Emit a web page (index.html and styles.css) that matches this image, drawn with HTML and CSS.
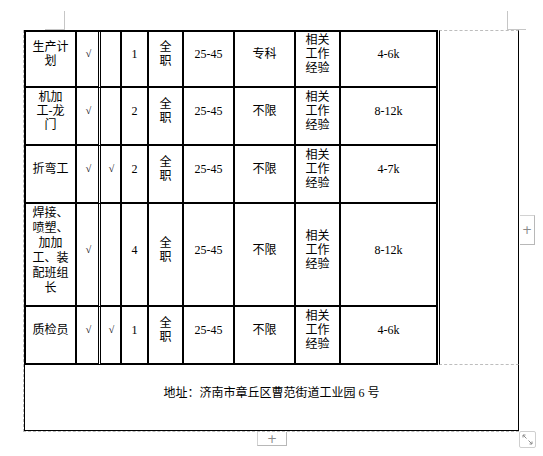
FILE: index.html
```html
<!DOCTYPE html>
<html lang="zh-CN">
<head>
<meta charset="utf-8">
<title>招聘岗位</title>
<link rel="stylesheet" href="styles.css">
</head>
<body>
<div class="page">
  <span class="mark mark-tl"></span>
  <span class="mark mark-tr"></span>
  <div class="doc">
    <div class="top">
      <div class="jobs">
        <div class="c"><span>生产计<br>划</span></div>
        <div class="c chk"><span>√</span></div>
        <div class="c chk"><span></span></div>
        <div class="c"><span>1</span></div>
        <div class="c"><span>全<br>职</span></div>
        <div class="c"><span>25-45</span></div>
        <div class="c"><span>专科</span></div>
        <div class="c"><span>相关<br>工作<br>经验</span></div>
        <div class="c"><span>4-6k</span></div>

        <div class="c"><span>机加<br>工-龙<br>门</span></div>
        <div class="c chk"><span>√</span></div>
        <div class="c chk"><span></span></div>
        <div class="c"><span>2</span></div>
        <div class="c"><span>全<br>职</span></div>
        <div class="c"><span>25-45</span></div>
        <div class="c"><span>不限</span></div>
        <div class="c"><span>相关<br>工作<br>经验</span></div>
        <div class="c"><span>8-12k</span></div>

        <div class="c"><span>折弯工</span></div>
        <div class="c chk"><span>√</span></div>
        <div class="c chk"><span>√</span></div>
        <div class="c"><span>2</span></div>
        <div class="c"><span>全<br>职</span></div>
        <div class="c"><span>25-45</span></div>
        <div class="c"><span>不限</span></div>
        <div class="c"><span>相关<br>工作<br>经验</span></div>
        <div class="c"><span>4-7k</span></div>

        <div class="c c-tall"><span>焊接、<br>喷塑、<br>加加<br>工、装<br>配班组<br>长</span></div>
        <div class="c chk"><span>√</span></div>
        <div class="c chk"><span></span></div>
        <div class="c"><span>4</span></div>
        <div class="c"><span>全<br>职</span></div>
        <div class="c"><span>25-45</span></div>
        <div class="c"><span>不限</span></div>
        <div class="c"><span>相关<br>工作<br>经验</span></div>
        <div class="c"><span>8-12k</span></div>

        <div class="c"><span>质检员</span></div>
        <div class="c chk"><span>√</span></div>
        <div class="c chk"><span>√</span></div>
        <div class="c"><span>1</span></div>
        <div class="c"><span>全<br>职</span></div>
        <div class="c"><span>25-45</span></div>
        <div class="c"><span>不限</span></div>
        <div class="c"><span>相关<br>工作<br>经验</span></div>
        <div class="c"><span>4-6k</span></div>
      </div>
      <div class="side"></div>
    </div>
    <div class="addr">地址：济南市章丘区曹范街道工业园 6 号</div>
  </div>
  <div class="tab tab-bottom">+</div>
  <div class="tab tab-right">+</div>
  <div class="resize">
    <svg width="15" height="15" viewBox="0 0 15 15">
      <path d="M3 3 L6.5 6.5 M3 3 L3 5.5 M3 3 L5.5 3" stroke="#8c8c8c" stroke-width="1" fill="none"/>
      <path d="M12 12 L8.5 8.5 M12 12 L12 9.5 M12 12 L9.5 12" stroke="#8c8c8c" stroke-width="1" fill="none"/>
    </svg>
  </div>
</div>
</body>
</html>
```

FILE: styles.css
```css
html, body {
  margin: 0;
  padding: 0;
  background: #ffffff;
}

.page {
  position: relative;
  width: 543px;
  height: 456px;
  box-sizing: border-box;
  padding: 30px 0 0 23px;
  font: 12px/14px "Liberation Serif", "Noto Sans CJK SC", serif;
  color: #000;
}

.mark {
  position: absolute;
  border-style: solid;
  border-color: #c6c6c6;
}

.mark-tl {
  left: 45px;
  top: 11px;
  width: 19px;
  height: 18px;
  border-width: 0 1px 1px 0;
}

.mark-tr {
  left: 507px;
  top: 11px;
  width: 18px;
  height: 18px;
  border-width: 0 0 1px 1px;
}

.doc {
  width: 496px;
  box-sizing: border-box;
  border-left: 1px dashed #bdbdbd;
  border-bottom: 1px dashed #bdbdbd;
}

.top {
  display: flex;
}

.jobs {
  display: grid;
  grid-template-columns: 51px 24px 21px 27px 35px 51px 61px 45px 97px;
  grid-template-rows: 56px 58px 58px 103px 58px;
  width: 414px;
  box-sizing: border-box;
  border-left: 2px solid #000;
  border-top: 2px solid #000;
}

.c {
  box-sizing: border-box;
  border-right: 2px solid #000;
  border-bottom: 2px solid #000;
  display: flex;
  align-items: center;
  justify-content: center;
  text-align: center;
  padding-bottom: 10px;
  white-space: nowrap;
}

.c:nth-child(9n+2) {
  border-right: 3px double #000;
}

.c-tall {
  line-height: 15px;
  padding-bottom: 8px;
}

.chk span {
  font-size: 10px;
  padding-left: 2px;
}

.side {
  width: 80px;
  margin-left: 1px;
  box-sizing: border-box;
  border-left: 1px solid #000;
  border-right: 1px solid #000;
  border-top: 1px dashed #bdbdbd;
  border-bottom: 1px dashed #bdbdbd;
}

.addr {
  height: 66px;
  box-sizing: border-box;
  border: 1px solid #000;
  border-top: none;
  padding-top: 21px;
  text-align: center;
}

.tab {
  position: absolute;
  box-sizing: border-box;
  background: #fff;
  border: 1px solid #d2d2d2;
  border-right-color: #b8b8b8;
  border-bottom-color: #b8b8b8;
  color: #8a8a8a;
  font: 12px/1 "DejaVu Sans", sans-serif;
  display: flex;
  align-items: center;
  justify-content: center;
}

.tab-bottom {
  left: 257px;
  top: 432px;
  width: 30px;
  height: 14px;
  border-top: none;
}

.tab-right {
  left: 520px;
  top: 215px;
  width: 15px;
  height: 30px;
  border-left: none;
}

.resize {
  position: absolute;
  left: 519px;
  top: 431px;
  width: 17px;
  height: 17px;
  box-sizing: border-box;
  border: 1px solid #cfcfcf;
  border-radius: 2px;
  background: #fff;
  display: flex;
  align-items: center;
  justify-content: center;
}

.resize svg {
  display: block;
}
```
